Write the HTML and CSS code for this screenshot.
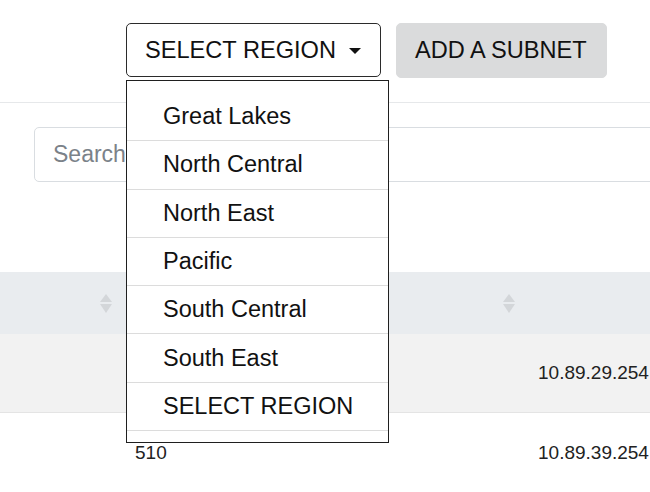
FILE: index.html
```html
<!DOCTYPE html>
<html lang="en">
<head>
<meta charset="utf-8">
<title>Subnets</title>
<link rel="stylesheet" href="styles.css">
</head>
<body>
<div class="page">
  <header class="topbar">
    <div class="actions">
      <div class="dropdown">
        <button class="btn btn-select" type="button">SELECT REGION<span class="caret"></span></button>
        <ul class="menu">
          <li class="menu-item">Great Lakes</li>
          <li class="menu-item">North Central</li>
          <li class="menu-item">North East</li>
          <li class="menu-item">Pacific</li>
          <li class="menu-item">South Central</li>
          <li class="menu-item">South East</li>
          <li class="menu-item">SELECT REGION</li>
        </ul>
      </div>
      <button class="btn btn-add" type="button">ADD A SUBNET</button>
    </div>
  </header>

  <div class="search-wrap">
    <input class="search" type="text" placeholder="Search">
  </div>

  <div class="table">
    <div class="row head">
      <div class="cell"><span class="sort"></span></div>
      <div class="cell"><span class="sort"></span></div>
      <div class="cell"></div>
    </div>
    <div class="row striped">
      <div class="cell"></div>
      <div class="cell"></div>
      <div class="cell">10.89.29.254</div>
    </div>
    <div class="row">
      <div class="cell"></div>
      <div class="cell">510</div>
      <div class="cell">10.89.39.254</div>
    </div>
  </div>
</div>
</body>
</html>
```

FILE: styles.css
```css
html, body {
  margin: 0;
  padding: 0;
  background: #ffffff;
  overflow: hidden;
}

body {
  font-family: "Liberation Sans", Arial, sans-serif;
  color: #212529;
  width: 650px;
  height: 492px;
}

.page {
  width: 650px;
  height: 492px;
  overflow: hidden;
}

.topbar {
  box-sizing: border-box;
  height: 103px;
  border-bottom: 1px solid #e6e8ea;
}

.actions {
  display: flex;
  gap: 15px;
  padding: 23px 0 0 126px;
}

.dropdown {
  position: relative;
}

.btn {
  font-family: "Liberation Sans", Arial, sans-serif;
  font-size: 23.6px;
  color: #111;
  display: flex;
  align-items: center;
  box-sizing: border-box;
  border-radius: 5px;
  margin: 0;
  cursor: pointer;
}

.btn-select {
  width: 255px;
  height: 54px;
  padding: 0 0 0 18px;
  background: #ffffff;
  border: 1px solid #2b2b2b;
}

.caret {
  display: inline-block;
  width: 0;
  height: 0;
  margin-left: 13px;
  margin-top: 2px;
  border-top: 6px solid #111;
  border-left: 6px solid transparent;
  border-right: 6px solid transparent;
}

.btn-add {
  width: 211px;
  height: 55px;
  padding: 0 0 0 18px;
  background: #dadbdc;
  border: 1px solid #dadbdc;
}

.menu {
  position: absolute;
  top: 57px;
  left: 0;
  width: 263px;
  box-sizing: border-box;
  margin: 0;
  padding: 12px 0 11px;
  list-style: none;
  background: #ffffff;
  border: 1px solid #1f1f1f;
  z-index: 10;
}

.menu-item {
  height: 47.3px;
  display: flex;
  align-items: center;
  padding-left: 36px;
  font-size: 23.5px;
  color: #111;
  border-bottom: 1px solid #dcdcdc;
}

.search-wrap {
  padding: 24px 0 0 34px;
}

.search {
  display: block;
  width: 660px;
  height: 55px;
  box-sizing: border-box;
  border: 1px solid #d9dde1;
  border-radius: 5px;
  padding: 0 0 0 18px;
  font-family: "Liberation Sans", Arial, sans-serif;
  font-size: 23px;
  color: #495057;
  outline: none;
}

.search::placeholder {
  color: #7b8289;
}

.table {
  margin-top: 90px;
  font-size: 19px;
  color: #222;
}

.row {
  display: grid;
  grid-template-columns: 122px 403px 1fr;
  height: 79px;
  box-sizing: border-box;
}

.row.head {
  height: 62px;
  background: #e9ecef;
}

.row.striped {
  background: #f2f2f2;
  border-bottom: 1px solid #e4e4e4;
}

.cell {
  display: flex;
  align-items: center;
  padding-left: 13px;
  white-space: nowrap;
}

.head .cell {
  justify-content: flex-end;
  padding-right: 10px;
}

.sort {
  display: inline-flex;
  flex-direction: column;
  align-items: center;
  gap: 2px;
}

.sort::before {
  content: "";
  width: 0;
  height: 0;
  border-bottom: 8px solid #d3d6d9;
  border-left: 6px solid transparent;
  border-right: 6px solid transparent;
}

.sort::after {
  content: "";
  width: 0;
  height: 0;
  border-top: 9px solid #d3d6d9;
  border-left: 6px solid transparent;
  border-right: 6px solid transparent;
}
```
